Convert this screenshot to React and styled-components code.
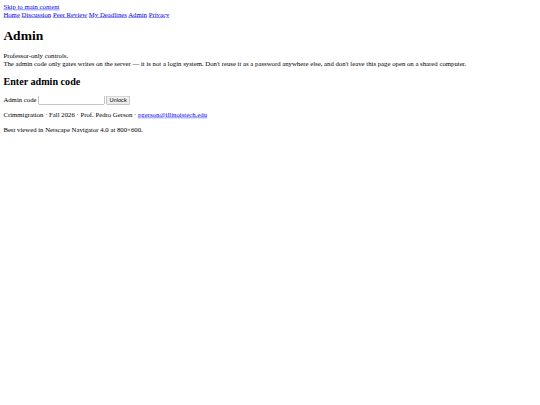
import React from "react";
import styled, { createGlobalStyle } from "styled-components";

const Global = createGlobalStyle`
  html, body { overflow: hidden; background: #fff; }
  body {
    margin: 0;
    font-family: "Liberation Serif", "Times New Roman", serif;
    font-size: 16px;
    color: #000;
  }
  a { color: #0000ee; }
`;

const Page = styled.div`
  width: 1264px;
  padding: 8px;
  transform: scale(0.421875);
  transform-origin: 0 0;
`;

const SkipLink = styled.a`
  display: block;
  width: fit-content;
`;

const Nav = styled.nav`
  display: block;
`;

const Title = styled.h1`
  font-size: 2em;
  margin: 0.67em 0;
`;

const Sub = styled.h2`
  font-size: 1.5em;
  margin: 0.83em 0;
`;

const Para = styled.p`
  margin: 1em 0;
`;

const Form = styled.form`
  margin: 1em 0;
`;

const Input = styled.input`
  box-sizing: border-box;
  width: 157px;
  margin: 0;
`;

const Button = styled.button`
  margin: 0;
`;

export default function App() {
  const links = ["Home", "Discussion", "Peer Review", "My Deadlines", "Admin", "Privacy"];
  return (
    <Page>
      <Global />
      <SkipLink href="#main">Skip to main content</SkipLink>
      <Nav>
        {links.map((l, i) => (
          <React.Fragment key={l}>
            <a href="#">{l}</a>
            {i < links.length - 1 ? " " : ""}
          </React.Fragment>
        ))}
      </Nav>
      <main id="main">
        <Title>Admin</Title>
        <Para>
          Professor-only controls.
          <br />
          The admin code only gates writes on the server — it is not a login system. Don't reuse it as a password anywhere else, and don't leave this page open on a shared computer.
        </Para>
        <Sub>Enter admin code</Sub>
        <Form onSubmit={(e) => e.preventDefault()}>
          <label htmlFor="code">Admin code</label>{" "}
          <Input id="code" type="password" /> <Button type="submit">Unlock</Button>
        </Form>
      </main>
      <footer>
        <Para>
          Crimmigration · Fall 2026 · Prof. Pedro Gerson · <a href="mailto:pgerson@illinoistech.edu">pgerson@illinoistech.edu</a>
        </Para>
        <Para>Best viewed in Netscape Navigator 4.0 at 800×600.</Para>
      </footer>
    </Page>
  );
}
